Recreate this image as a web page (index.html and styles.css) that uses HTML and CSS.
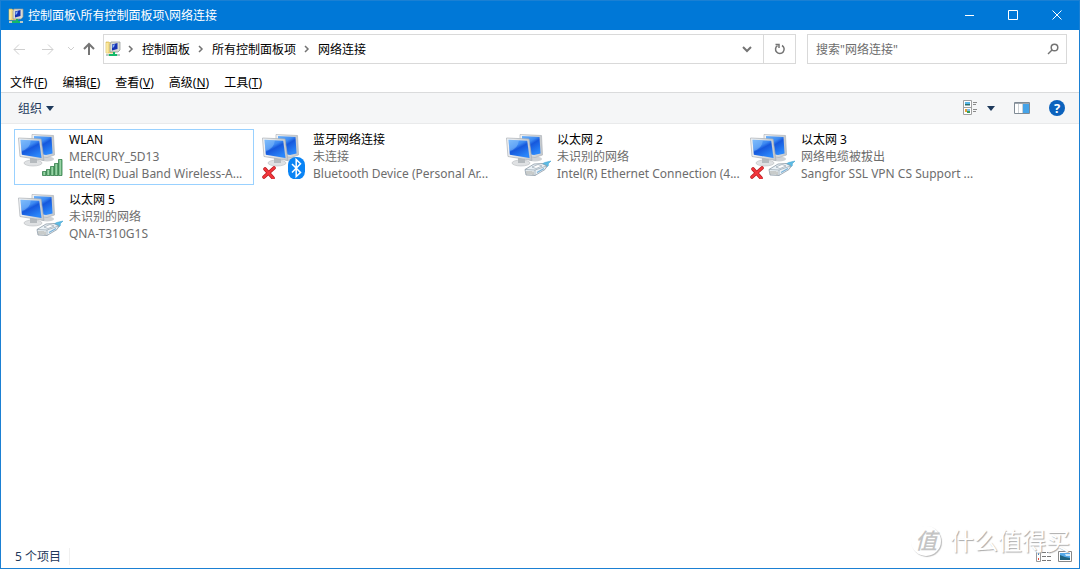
FILE: index.html
```html
<!DOCTYPE html>
<html lang="zh-CN">
<head>
<meta charset="utf-8">
<meta name="viewport" content="width=device-width, initial-scale=1">
<title>网络连接</title>
<link rel="stylesheet" href="styles.css">
</head>
<body>
<svg class="defs" width="0" height="0" aria-hidden="true">
  <defs>
    <linearGradient id="screen" x1="0" y1="0" x2=".6" y2="1">
      <stop offset="0" stop-color="#6cb2fa"/><stop offset=".4" stop-color="#3d8af2"/><stop offset=".55" stop-color="#1658dc"/><stop offset="1" stop-color="#2a86fa"/>
    </linearGradient>
    <linearGradient id="bezel" x1="0" y1="0" x2="1" y2="0">
      <stop offset="0" stop-color="#f4f5f7"/><stop offset="1" stop-color="#c2c7cb"/>
    </linearGradient>
    <linearGradient id="bars" x1="0" y1="0" x2="1" y2="0">
      <stop offset="0" stop-color="#4a9f63"/><stop offset=".5" stop-color="#a5dab0"/><stop offset="1" stop-color="#56ab6c"/>
    </linearGradient>
    <symbol id="pcs" viewBox="0 0 48 48">
      <ellipse cx="31" cy="28" rx="7" ry="2.500" fill="#d0d3d6"/>
      <path d="M16 3.500 37.500 4.500 38.500 24 31 26.500 16 24Z" fill="url(#bezel)" stroke="#b0b5ba" stroke-width=".7"/>
      <path d="M18 5 35.500 6 36.500 22.500 30 24 18 22Z" fill="url(#screen)"/>
      <ellipse cx="17" cy="32" rx="9" ry="3" fill="#dfe1e3" stroke="#b7bbbe" stroke-width=".6"/>
      <path d="M14 26 21 28 21 32 14 32Z" fill="#b5babe"/>
      <path d="M2.500 7 25 8 28 29.500 4 25.500Z" fill="url(#bezel)" stroke="#a9afb4" stroke-width=".7"/>
      <path d="M4.500 8.800 23.200 9.700 25.500 27 5.800 23.700Z" fill="url(#screen)"/>
      <path d="M4.500 8.800 15 9.300Q14 18 5.500 20Z" fill="#9accfc" opacity=".4"/>
    </symbol>
    <symbol id="signal" viewBox="0 0 48 48">
      <g fill="url(#bars)" stroke="#357f4b" stroke-width=".8">
        <path d="M26.500 40.500h3.500v4h-3.500z"/><path d="M30.500 38.500h3.500v6h-3.500z"/><path d="M34.500 35.500h3.500v9h-3.500z"/><path d="M38.500 32.500h3.500v12h-3.500z"/><path d="M42.500 28.500h3.500v16h-3.500z"/>
      </g>
    </symbol>
    <symbol id="plug" viewBox="0 0 48 48">
      <path d="M36 34Q40 31 47 30L44 33Q46 34.500 41 37Z" fill="#5cbbe4" stroke="#3b9ccc" stroke-width=".5"/>
      <path d="M21 38.500 30 33 38 32.500 43 35 41 38.500 31 44.500 22 44Z" fill="#eaf1f6" stroke="#7f8e9b" stroke-width=".7"/>
      <path d="M21 38.500 31 39 42.500 35M31 39V44.500" fill="none" stroke="#94a2ad" stroke-width=".7"/>
      <path d="M28 36 34 33.500 38 35 32 37.500Z" fill="#fff" stroke="#8b9ba8" stroke-width=".6"/>
      <path d="M23 40V43.500M25 40V43.500M27 40V43.500M29 40.500V44" stroke="#97958a" stroke-width=".8"/>
      <path d="M33 41.500 40 37.500" stroke="#79b1d8" stroke-width="1.300"/>
    </symbol>
    <symbol id="cross" viewBox="0 0 48 48">
      <path d="m5 38 8 9m1-10L4 46" fill="none" stroke="#b81a1e" stroke-width="3.600" stroke-linecap="round"/>
      <path d="m5 38 8 9m1-10L4 46" fill="none" stroke="#f2363c" stroke-width="2.200" stroke-linecap="round"/>
    </symbol>
    <symbol id="bluetooth" viewBox="0 0 48 48">
      <rect x="28" y="26" width="17" height="22.500" rx="8" fill="#0a84f5"/>
      <path d="m32 33 8.500 8.500-4.300 4v-17l4.300 4.300L32 41.500" fill="none" stroke="#fff" stroke-width="1.500"/>
    </symbol>
    <symbol id="netfolder" viewBox="0 0 16 16">
      <path d="M1 1h3l1 1h5v10H1Z" fill="#f4dc84" stroke="#d5b348" stroke-width=".6"/>
      <path d="M2 2v10" stroke="#fff4bf"/>
      <path d="M6 1h9v8l-2 2H5V3Z" fill="#dadcd3" stroke="#8d9392" stroke-width=".7"/>
      <path d="M7 3.500 12.500 2v6L7 9.500Z" fill="#1532b4"/>
      <path d="M7.500 4 10 3.300 9 6 7.500 7Z" fill="#89b5fa"/>
      <path d="M8 11h2v2h3v2H3v-2h5Z" fill="#12b96a"/>
      <path d="M1 13h3v2H1zM12 13h3v2h-3z" fill="#bcc9c4"/>
    </symbol>
  </defs>
</svg>

<div class="window">
  <header class="titlebar">
    <svg class="icon16"><use href="#netfolder"/></svg>
    <h1 class="title">控制面板\所有控制面板项\网络连接</h1>
    <div class="captions">
      <button class="caption" aria-label="最小化"><svg width="12" height="12" viewBox="0 0 12 12"><path d="M2 5.500h9"/></svg></button>
      <button class="caption" aria-label="最大化"><svg width="12" height="12" viewBox="0 0 12 12"><path d="M1.500.500h9v9h-9z"/></svg></button>
      <button class="caption" aria-label="关闭"><svg width="12" height="12" viewBox="0 0 12 12"><path d="m1.500.500 9 9m0-9-9 9"/></svg></button>
    </div>
  </header>

  <div class="navbar">
    <div class="history">
      <button class="nav off" aria-label="后退"><svg width="14" height="14" viewBox="0 0 14 14"><path d="M13 7.500H2m5-5-5 5 5 5"/></svg></button>
      <button class="nav off" aria-label="前进"><svg width="14" height="14" viewBox="0 0 14 14"><path d="M1 7.500h11m-5-5 5 5-5 5"/></svg></button>
      <button class="nav small off" aria-label="最近浏览的位置"><svg width="6" height="6" viewBox="0 0 6 6"><path d="m0 1 3 3 3-3"/></svg></button>
      <button class="nav up" aria-label="上移"><svg width="14" height="14" viewBox="0 0 14 14"><path d="M7 13V2M2 7l5-5 5 5"/></svg></button>
    </div>
    <div class="address">
      <svg class="icon16"><use href="#netfolder"/></svg>
      <nav class="crumbs">
        <svg class="chev" viewBox="0 0 6 8"><path d="m1 1 3 3-3 3"/></svg>
        <a href="#">控制面板</a>
        <svg class="chev" viewBox="0 0 6 8"><path d="m1 1 3 3-3 3"/></svg>
        <a href="#">所有控制面板项</a>
        <svg class="chev" viewBox="0 0 6 8"><path d="m1 1 3 3-3 3"/></svg>
        <a href="#">网络连接</a>
      </nav>
      <button class="drop" aria-label="以前的位置"><svg width="10" height="8" viewBox="0 0 10 8"><path d="m1 2 4 4 4-4"/></svg></button>
      <button class="refresh" aria-label="刷新"><svg width="12" height="12" viewBox="0 0 12 12"><path d="M8 2.500A4.300 4.300 0 1 1 3.500 2.600"/><path d="M1.500 1.500H5V5"/></svg></button>
    </div>
    <div class="search">
      <input type="text" aria-label="搜索" placeholder='搜索"网络连接"'>
      <svg width="12" height="12" viewBox="0 0 12 12"><circle cx="7.500" cy="4.500" r="3.300"/><path d="M5 7 1 11"/></svg>
    </div>
  </div>

  <div class="menubar">
    <button>文件(<u>F</u>)</button>
    <button>编辑(<u>E</u>)</button>
    <button>查看(<u>V</u>)</button>
    <button>高级(<u>N</u>)</button>
    <button>工具(<u>T</u>)</button>
  </div>

  <div class="toolbar">
    <button class="organize">组织 <svg width="8" height="5" viewBox="0 0 8 5"><path d="M0 0h8L4 5Z"/></svg></button>
    <div class="tools">
      <button class="view" aria-label="更改视图">
        <svg width="16" height="16" viewBox="0 0 16 16"><path d="M1.500.500h8v14h-8zM1.500 7.500h8" fill="#fff" stroke="#a0a0a0"/><path d="M3 2h5v3H3z" fill="#59b7e8"/><path d="M3 4h5v1.500H3z" fill="#2d6f6c"/><path d="M3 9h2v3H3z" fill="#e2a032"/><path d="M5 11h3v2H5z" fill="#3a9d58"/><path d="M5 9h3v2H5z" fill="#7cbcf0"/><path d="M11 2.500h4M11 4.500h3M11 9.500h4M11 11.500h3" stroke="#8b8b8b"/></svg>
        <svg class="tri" width="8" height="5" viewBox="0 0 8 5"><path d="M0 0h8L4 5Z"/></svg>
      </button>
      <button aria-label="显示预览窗格"><svg width="16" height="12" viewBox="0 0 16 12"><path d="M.5.500h15v11H.5z" fill="#fff" stroke="#7f8a94"/><path d="M1 1.500h14" stroke="#9da5ad"/><path d="M4.500 2v9M8.500 2v9" stroke="#cdd2d6"/><path d="M9 2h6v9H9z" fill="#45a3e8"/></svg></button>
      <button class="help" aria-label="帮助">?</button>
    </div>
  </div>

  <main class="content">
    <ul class="grid">
      <li><button class="item selected">
        <svg class="icon48"><use href="#pcs"/><use href="#signal"/></svg>
        <span class="lines"><span class="name">WLAN</span><span>MERCURY_5D13</span><span>Intel(R) Dual Band Wireless-A...</span></span>
      </button></li>
      <li><button class="item">
        <svg class="icon48"><use href="#pcs"/><use href="#cross"/><use href="#bluetooth"/></svg>
        <span class="lines"><span class="name">蓝牙网络连接</span><span>未连接</span><span>Bluetooth Device (Personal Ar...</span></span>
      </button></li>
      <li><button class="item">
        <svg class="icon48"><use href="#pcs"/><use href="#plug"/></svg>
        <span class="lines"><span class="name">以太网 2</span><span>未识别的网络</span><span>Intel(R) Ethernet Connection (4...</span></span>
      </button></li>
      <li><button class="item">
        <svg class="icon48"><use href="#pcs"/><use href="#cross"/><use href="#plug"/></svg>
        <span class="lines"><span class="name">以太网 3</span><span>网络电缆被拔出</span><span>Sangfor SSL VPN CS Support ...</span></span>
      </button></li>
      <li><button class="item">
        <svg class="icon48"><use href="#pcs"/><use href="#plug"/></svg>
        <span class="lines"><span class="name">以太网 5</span><span>未识别的网络</span><span>QNA-T310G1S</span></span>
      </button></li>
    </ul>
  </main>

  <footer class="status">
    <span class="count">5 个项目</span>
    <div class="modes">
      <button aria-label="详细信息"><svg width="16" height="12" viewBox="0 0 16 12"><path d="M.5.500h4v10h-4z" fill="#fff" stroke="#999"/><path d="M2 2h1v2H2z" fill="#3b8ad0"/><path d="M2 7h1v2H2z" fill="#e34b3c"/><path d="M6 1.500h4m1 0h4M6 5.500h4m1 0h4M6 9.500h4m1 0h4" stroke="#777"/></svg></button>
      <button aria-label="大图标"><svg width="14" height="12" viewBox="0 0 14 12"><path d="M.5.500h13v10H.5z" fill="#fff" stroke="#888"/><path d="M2 2h10v7H2z" fill="#54a9e9"/><path d="m2 4 5 2 5 1v2H2z" fill="#1f6480"/><path d="M7 3h5v2H8z" fill="#cce9fb"/></svg></button>
    </div>
  </footer>
  <div class="watermark"><span class="seal">值</span><span>什么值得买</span></div>
</div>
</body>
</html>
```
FILE: styles.css
```css
* {
  box-sizing: border-box;
}

body {
  margin: 0;
  font: 12px/17px "Noto Sans", "Noto Sans CJK SC", sans-serif;
  color: #000;
  background: #fff;
}

button {
  margin: 0;
  padding: 0;
  border: 0;
  background: none;
  color: inherit;
  font: inherit;
  text-align: left;
}

svg {
  display: block;
  flex: none;
}

.defs {
  position: absolute;
}

.window {
  position: relative;
  display: flex;
  flex-direction: column;
  min-height: 100vh;
  border: 1px solid #1b80d3;
  background: #fff;
}

.icon16 {
  width: 16px;
  height: 16px;
}

.icon48 {
  width: 48px;
  height: 48px;
}

/* Title bar */
.titlebar {
  display: flex;
  align-items: center;
  height: 29px;
  padding-left: 7px;
  gap: 4px;
  background: #0078d7;
  color: #fff;
}

.title {
  flex: 1;
  margin: 0;
  font-size: 12px;
  font-weight: 400;
}

.captions {
  display: flex;
}

.caption {
  display: grid;
  place-items: center;
  width: 44px;
  height: 28px;
}

.caption path {
  fill: none;
  stroke: #fff;
}

/* Navigation */
.navbar {
  display: flex;
  padding: 4px 12px 0 11px;
}

.history {
  display: flex;
  align-items: center;
  width: 91px;
  gap: 15px;
}

.nav path {
  fill: none;
  stroke: #757575;
  stroke-width: 2;
}

.nav.off path {
  stroke: #cfcfcf;
  stroke-width: 1;
}

.nav.small {
  margin: 0 -7px 0 -2px;
}

.address,
.search {
  display: flex;
  align-items: center;
  height: 30px;
  border: 1px solid #d9d9d9;
}

.address {
  flex: 1;
  padding-left: 1px;
}

.crumbs {
  display: flex;
  flex: 1;
  align-items: center;
  padding-left: 7px;
  gap: 8px;
}

.crumbs a {
  color: inherit;
  text-decoration: none;
}

.chev {
  width: 6px;
  height: 8px;
}

.chev path,
.drop path,
.refresh path,
.search svg {
  fill: none;
  stroke: #747474;
  stroke-width: 1.5;
}

.drop path {
  stroke-width: 2;
}

.drop,
.refresh {
  display: grid;
  place-items: center;
  width: 32px;
  height: 28px;
}

.refresh {
  border-left: 1px solid #d9d9d9;
}

.search {
  width: 260px;
  margin-left: 11px;
  padding: 0 7px 0 8px;
}

.search input {
  flex: 1;
  min-width: 0;
  padding: 0;
  border: 0;
  outline: 0;
  font: inherit;
}

.search input::placeholder {
  color: #6d6d6d;
  opacity: 1;
}

/* Menu */
.menubar {
  display: flex;
  height: 28px;
  padding: 9px 9px 0;
  gap: 15px;
}

.menubar button {
  display: block;
  height: 19px;
}

/* Command bar */
.toolbar {
  display: flex;
  align-items: center;
  justify-content: space-between;
  height: 32px;
  padding: 0 14px 0 17px;
  border-top: 1px solid #dadbdc;
  border-bottom: 1px solid #e9eaeb;
  background: #f5f6f7;
}

.organize {
  display: flex;
  align-items: center;
  gap: 4px;
  color: #1e395b;
}

.organize path,
.tri path {
  fill: #1e395b;
}

.tools {
  display: flex;
  align-items: center;
  gap: 19px;
}

.view {
  display: flex;
  align-items: center;
  gap: 9px;
}

.help {
  width: 16px;
  height: 16px;
  border-radius: 8px;
  background: #0b62bd;
  color: #fff;
  font-size: 13px;
  font-weight: 700;
  line-height: 16px;
  text-align: center;
}

/* Connections */
.content {
  flex: 1;
  padding: 5px 13px;
}

.grid {
  display: grid;
  grid-template-columns: repeat(auto-fill, 240px);
  gap: 4px;
  margin: 0;
  padding: 0;
  list-style: none;
}

.item {
  display: flex;
  width: 100%;
  height: 56px;
  padding: 1px 0 0 1px;
  gap: 5px;
  border: 1px solid transparent;
}

.item.selected {
  border-color: #99d1ff;
}

.lines {
  display: flex;
  flex-direction: column;
  color: #6d6d6d;
  white-space: nowrap;
}

.name {
  color: #000;
}

/* Status */
.status {
  display: flex;
  align-items: center;
  justify-content: space-between;
  height: 23px;
  padding: 0 7px 0 14px;
  color: #1e395b;
}

.count {
  padding-right: 8px;
  border-right: 1px solid #f0f0f0;
}

.modes {
  display: flex;
  gap: 6px;
}

.watermark {
  position: absolute;
  right: 9px;
  bottom: 11px;
  display: flex;
  align-items: center;
  gap: 9px;
  color: #fff;
  font-size: 24px;
  line-height: 32px;
  text-shadow: 1px 1px 1px #aaa;
  pointer-events: none;
}

.seal {
  width: 30px;
  height: 30px;
  border-radius: 15px;
  box-shadow: 1px 1px 1px #bbb;
  color: #c4c4c4;
  font-size: 22px;
  font-style: italic;
  font-weight: 500;
  line-height: 28px;
  text-align: center;
  text-shadow: none;
}
```
